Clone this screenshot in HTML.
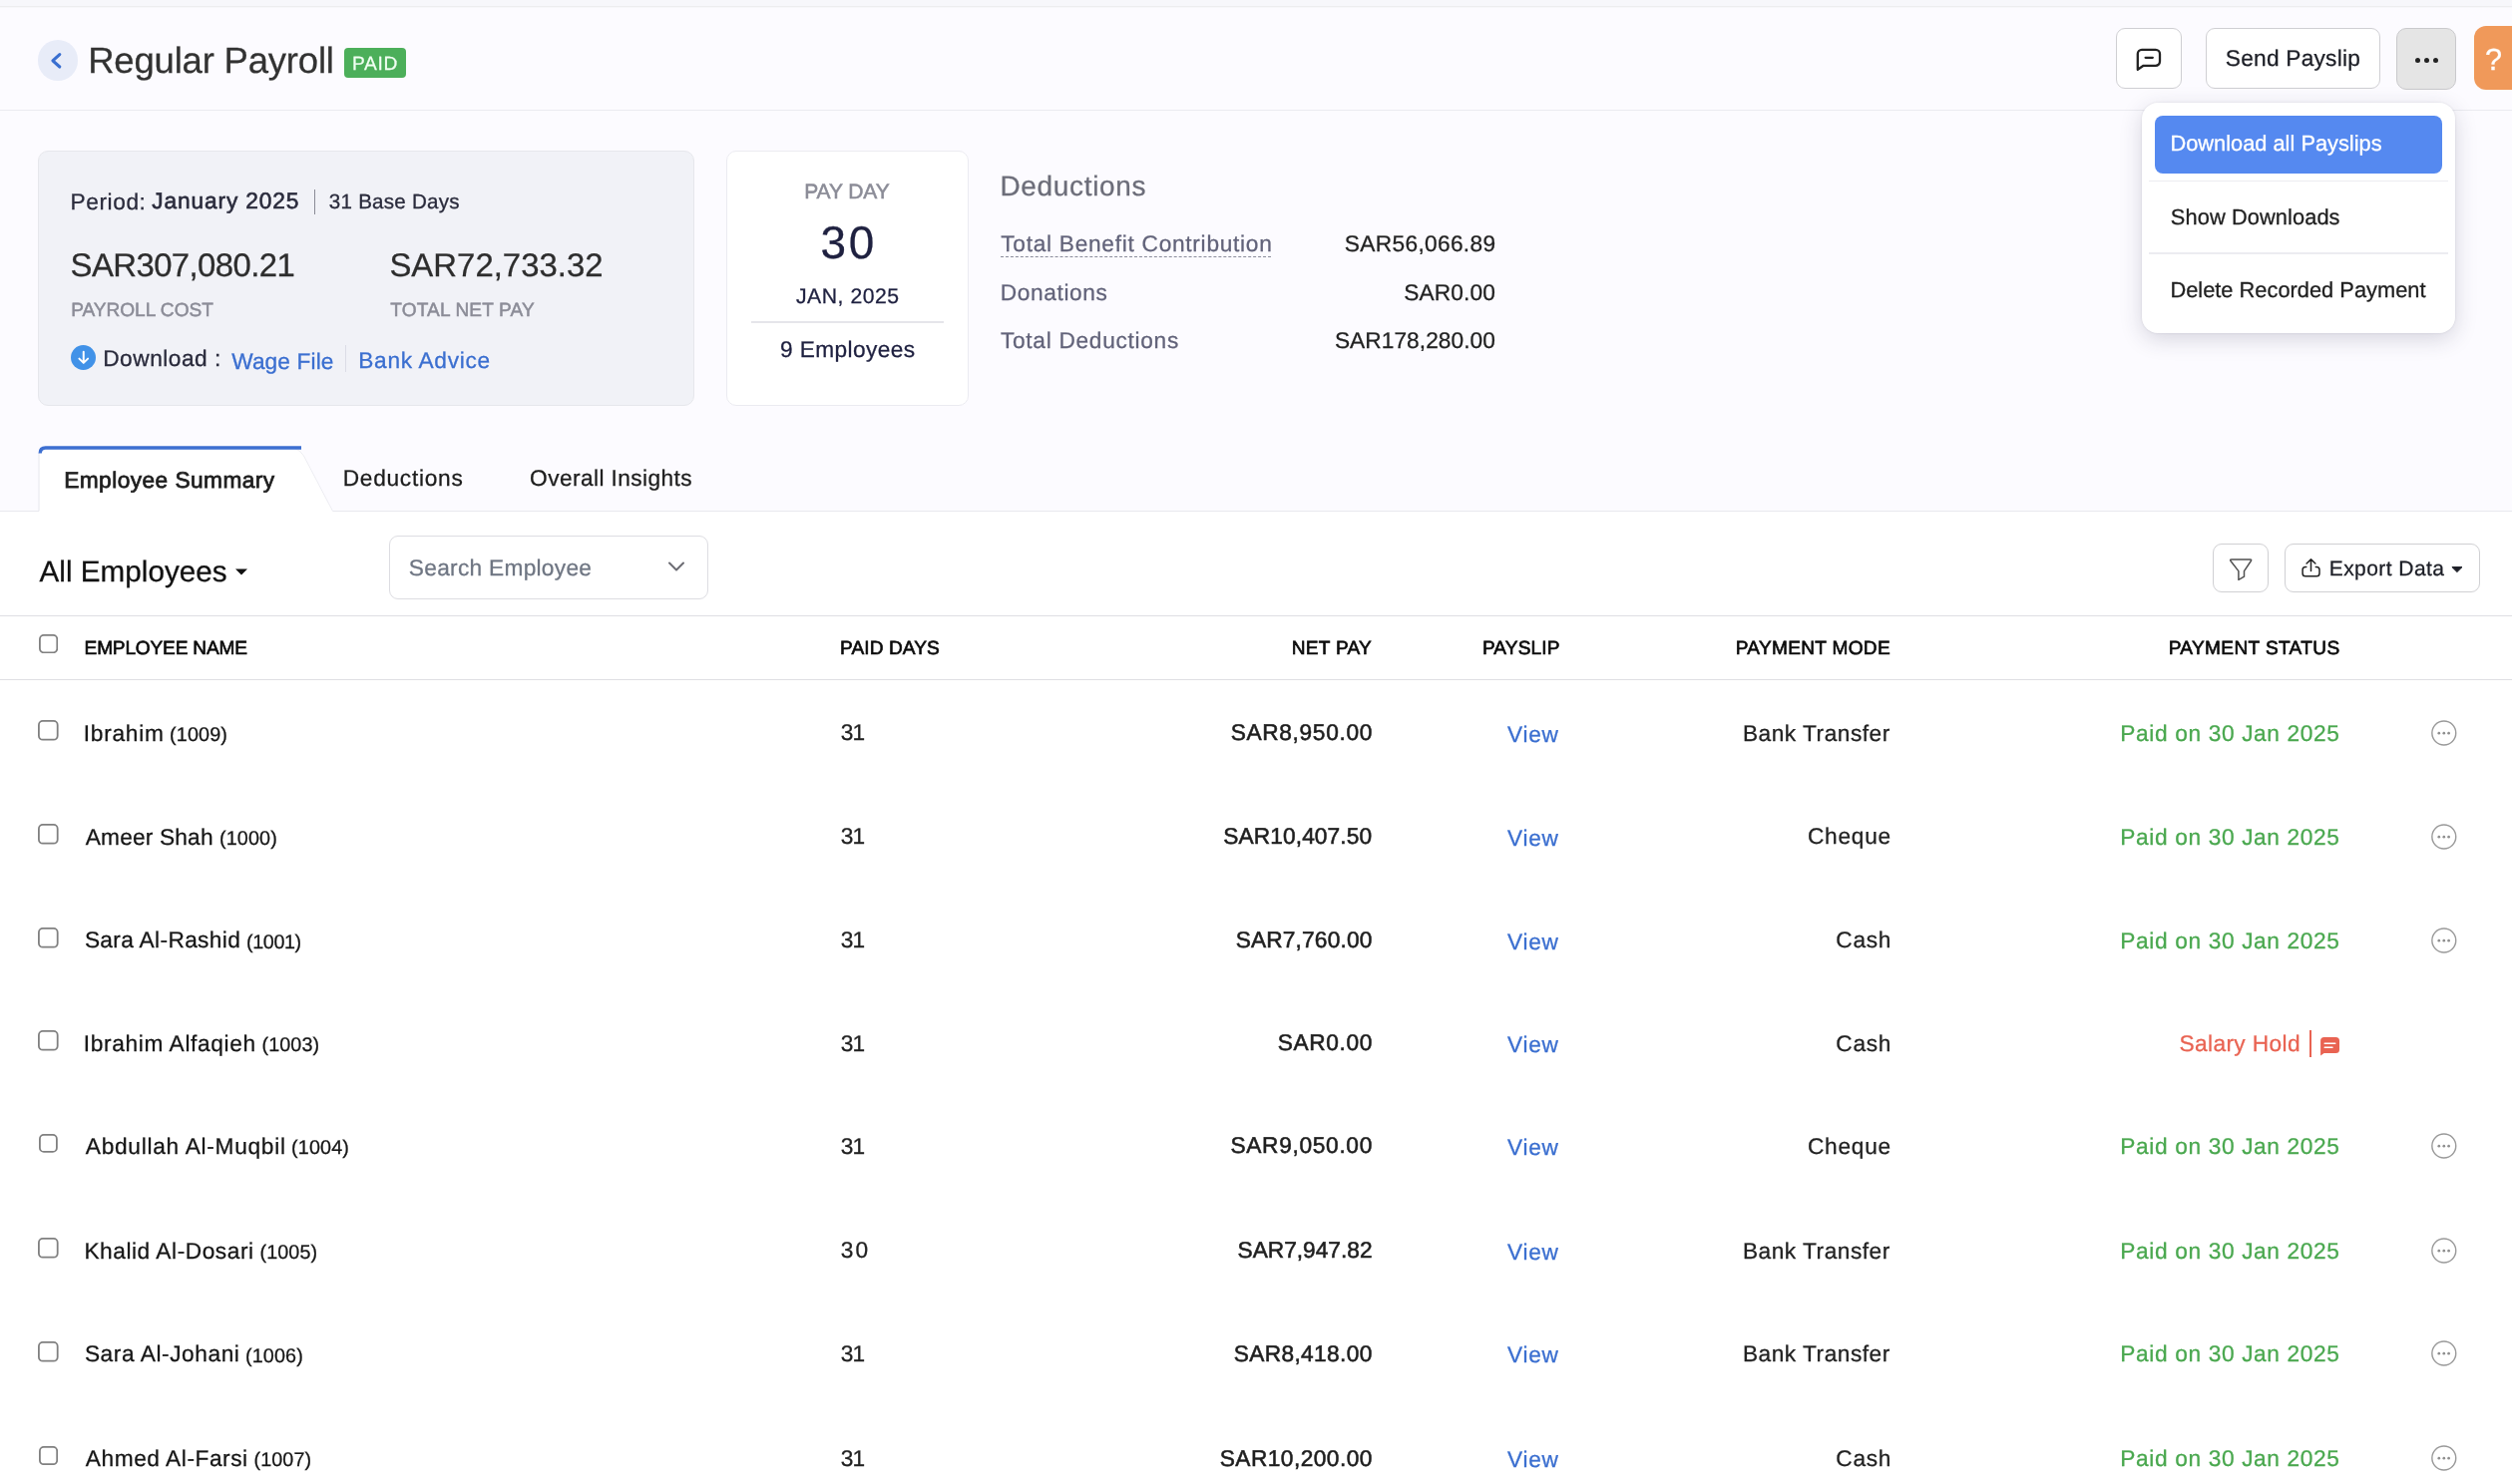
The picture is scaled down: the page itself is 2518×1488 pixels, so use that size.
<!DOCTYPE html>
<html lang="en"><head><meta charset="utf-8"><title>Regular Payroll</title>
<style>
html,body{margin:0;padding:0;}
body{width:2518px;height:1488px;overflow:hidden;position:relative;background:#fcfbff;font-family:"Liberation Sans",sans-serif;}
.b{position:absolute;display:block;}
.t{position:absolute;white-space:nowrap;line-height:1;text-rendering:geometricPrecision;}
#w{position:absolute;left:0;top:0;width:2518px;height:1488px;will-change:transform;}
</style></head><body><div id="w">
<div class="b" style="left:0px;top:0px;width:2518px;height:6px;background:#f7f7fb;"></div>
<div class="b" style="left:0px;top:6px;width:2518px;height:1px;background:#ededef;"></div>
<div class="b" style="left:0px;top:7px;width:2518px;height:1px;background:#f7f7fa;"></div>
<div class="b" style="left:0px;top:110px;width:2518px;height:1px;background:#ebebf0;"></div>
<div class="b" style="left:0px;top:512px;width:2518px;height:976px;background:#fff;"></div>
<div class="b" style="left:0px;top:512px;width:2518px;height:1px;background:#e9e9ee;"></div>
<div class="b" style="left:37.9px;top:40.4px;width:40.2px;height:40.2px;border-radius:50%;background:#e8ecf8;"></div>
<svg class="b" style="left:48px;top:49px" width="20" height="24" viewBox="0 0 20 24"><path d="M11.8 5.6 L4.9 11.8 L11.8 18" fill="none" stroke="#3a6fd0" stroke-width="3.1" stroke-linecap="round" stroke-linejoin="round"/></svg>
<div class="t" id="t0" style="top:43px;font-size:36.5px;color:#323232;letter-spacing:-0.20px;-webkit-text-stroke:0.25px #323232;left:88.2px;">Regular Payroll</div>
<div class="b" style="left:344.9px;top:47.9px;width:62.4px;height:30.1px;background:#4caf5a;border-radius:4px;"></div>
<div class="t" id="t1" style="top:55px;font-size:19.2px;color:#f1fff3;letter-spacing:0.65px;-webkit-text-stroke:0.25px #f1fff3;left:353.1px;">PAID</div>
<div class="b" style="left:2121px;top:28px;width:66px;height:61px;background:#fff;border:1px solid #cfcfd3;border-radius:9px;box-sizing:border-box;"></div>
<svg class="b" style="left:2139px;top:46px" width="30" height="28" viewBox="0 0 30 28"><path d="M3.8 23.8 V8 a4.2 4.2 0 0 1 4.2-4.2 h13.8 a4.2 4.2 0 0 1 4.2 4.2 v7.6 a4.2 4.2 0 0 1-4.2 4.2 H9.6 Z" fill="none" stroke="#222" stroke-width="2.3" stroke-linejoin="round"/><path d="M11.6 11.8 h7.2" stroke="#222" stroke-width="2.3" stroke-linecap="round"/></svg>
<div class="b" style="left:2211px;top:28px;width:175px;height:61px;background:#fff;border:1px solid #cfcfd3;border-radius:9px;box-sizing:border-box;"></div>
<div class="t" id="t2" style="top:47px;font-size:22.7px;color:#1c1e26;letter-spacing:0.24px;-webkit-text-stroke:0.28px #1c1e26;left:2230.8px;">Send Payslip</div>
<div class="b" style="left:2402px;top:28px;width:60px;height:62px;background:#e5e5e5;border:1px solid #c9c9cc;border-radius:10px;box-sizing:border-box;"></div>
<div class="b" style="left:2420.5px;top:57.5px;width:5px;height:5px;border-radius:50%;background:#222;"></div>
<div class="b" style="left:2429.7px;top:57.5px;width:5px;height:5px;border-radius:50%;background:#222;"></div>
<div class="b" style="left:2438.9px;top:57.5px;width:5px;height:5px;border-radius:50%;background:#222;"></div>
<div class="b" style="left:2480px;top:26px;width:60px;height:64px;background:#f0995a;border-radius:12px;"></div>
<div class="t" id="t3" style="top:45px;font-size:30.6px;color:#fff;-webkit-text-stroke:0.3px #fff;left:2491.0px;">?</div>
<div class="b" style="left:2147px;top:102.5px;width:314px;height:231px;background:#fff;border-radius:16px;box-shadow:0 6px 22px rgba(40,40,70,.18),0 0 3px rgba(40,40,70,.10);"></div>
<div class="b" style="left:2160px;top:115.5px;width:288px;height:58px;background:#5589f0;border-radius:8px;"></div>
<div class="t" id="t4" style="top:133px;font-size:21.8px;color:#fff;letter-spacing:0.01px;-webkit-text-stroke:0.3px #fff;left:2175.4px;">Download all Payslips</div>
<div class="b" style="left:2154px;top:180.5px;width:300px;height:1.5px;background:#ececf1;"></div>
<div class="t" id="t5" style="top:207px;font-size:21.8px;color:#1f1f1f;letter-spacing:0.10px;-webkit-text-stroke:0.3px #1f1f1f;left:2175.8px;">Show Downloads</div>
<div class="b" style="left:2154px;top:253px;width:300px;height:1.5px;background:#ececf1;"></div>
<div class="t" id="t6" style="top:280px;font-size:21.8px;color:#1f1f1f;letter-spacing:0.02px;-webkit-text-stroke:0.3px #1f1f1f;left:2175.4px;">Delete Recorded Payment</div>
<div class="b" style="left:38px;top:151px;width:658px;height:256px;background:#f1f2f7;border:1px solid #e6e7ec;border-radius:10px;box-sizing:border-box;"></div>
<div class="t" id="t7" style="top:191px;font-size:22.7px;color:#2a2b3c;letter-spacing:0.57px;-webkit-text-stroke:0.28px #2a2b3c;left:70.6px;">Period:</div>
<div class="t" id="t8" style="top:190px;font-size:22.7px;color:#2a2b3c;letter-spacing:0.89px;-webkit-text-stroke:0.6px #2a2b3c;left:152.2px;">January 2025</div>
<div class="b" style="left:315px;top:190px;width:1.2px;height:25px;background:#8a8b96;"></div>
<div class="t" id="t9" style="top:193px;font-size:20.6px;color:#2a2b3c;letter-spacing:0.24px;-webkit-text-stroke:0.28px #2a2b3c;left:329.8px;">31 Base Days</div>
<div class="t" id="t10" style="top:250px;font-size:32.9px;color:#2d2d2d;letter-spacing:-0.59px;-webkit-text-stroke:0.28px #2d2d2d;left:70.6px;">SAR307,080.21</div>
<div class="t" id="t11" style="top:250px;font-size:32.9px;color:#2d2d2d;letter-spacing:0.02px;-webkit-text-stroke:0.28px #2d2d2d;left:390.4px;">SAR72,733.32</div>
<div class="t" id="t12" style="top:302px;font-size:19.1px;color:#8b8c97;letter-spacing:-0.02px;-webkit-text-stroke:0.5px #8b8c97;left:71.2px;">PAYROLL COST</div>
<div class="t" id="t13" style="top:302px;font-size:19.1px;color:#8b8c97;letter-spacing:0.12px;-webkit-text-stroke:0.5px #8b8c97;left:391.3px;">TOTAL NET PAY</div>
<div class="b" style="left:71.1px;top:346.1px;width:25.2px;height:25.2px;border-radius:50%;background:#4192e8;"></div>
<svg class="b" style="left:71px;top:346px" width="26" height="26" viewBox="0 0 26 26"><path d="M12.75 6.8 V17.6 M8.4 13.6 L12.75 17.9 L17.1 13.6" fill="none" stroke="#fff" stroke-width="2" stroke-linecap="round" stroke-linejoin="round"/></svg>
<div class="t" id="t14" style="top:348px;font-size:22.7px;color:#2a2b3c;letter-spacing:0.52px;-webkit-text-stroke:0.3px #2a2b3c;left:103.2px;">Download :</div>
<div class="t" id="t15" style="top:351px;font-size:22.7px;color:#3b6fd0;letter-spacing:0.12px;-webkit-text-stroke:0.3px #3b6fd0;left:232.2px;">Wage File</div>
<div class="b" style="left:345.8px;top:346px;width:1.2px;height:27px;background:#dcdde6;"></div>
<div class="t" id="t16" style="top:350px;font-size:22.7px;color:#3b6fd0;letter-spacing:0.69px;-webkit-text-stroke:0.3px #3b6fd0;left:359.3px;">Bank Advice</div>
<div class="b" style="left:728.3px;top:151.2px;width:242.5px;height:255.6px;background:#fff;border:1px solid #ebebf1;border-radius:10px;box-sizing:border-box;"></div>
<div class="t" id="t17" style="top:182px;font-size:21px;color:#8b8c97;letter-spacing:-0.07px;-webkit-text-stroke:0.55px #8b8c97;left:648.9px;width:400px;text-align:center;">PAY DAY</div>
<div class="t" id="t18" style="top:221px;font-size:45.9px;color:#1f2140;letter-spacing:2.82px;-webkit-text-stroke:0.28px #1f2140;left:650.8px;width:400px;text-align:center;">30</div>
<div class="t" id="t19" style="top:287px;font-size:21.2px;color:#1f2140;letter-spacing:0.53px;-webkit-text-stroke:0.28px #1f2140;left:649.8px;width:400px;text-align:center;">JAN, 2025</div>
<div class="b" style="left:753px;top:322.3px;width:193px;height:1.5px;background:#e5e5ea;"></div>
<div class="t" id="t20" style="top:339px;font-size:22.7px;color:#1f2140;letter-spacing:0.39px;-webkit-text-stroke:0.28px #1f2140;left:649.7px;width:400px;text-align:center;">9 Employees</div>
<div class="t" id="t21" style="top:173px;font-size:28px;color:#6c6d79;letter-spacing:0.68px;-webkit-text-stroke:0.28px #6c6d79;left:1002.4px;">Deductions</div>
<div class="t" id="t22" style="top:233px;font-size:22.7px;color:#62637a;letter-spacing:0.72px;-webkit-text-stroke:0.28px #62637a;left:1003.3px;">Total Benefit Contribution</div>
<div class="b" style="left:1003.3px;top:257.2px;width:270.5px;height:0px;border-top:1.3px dashed #8b8c9c;"></div>
<div class="t" id="t23" style="top:282px;font-size:22.7px;color:#62637a;letter-spacing:0.61px;-webkit-text-stroke:0.28px #62637a;left:1002.8px;">Donations</div>
<div class="t" id="t24" style="top:330px;font-size:22.7px;color:#62637a;letter-spacing:0.70px;-webkit-text-stroke:0.28px #62637a;left:1003.0px;">Total Deductions</div>
<div class="t" id="t25" style="top:233px;font-size:22.7px;color:#222;letter-spacing:0.33px;-webkit-text-stroke:0.28px #222;right:1018.6px;">SAR56,066.89</div>
<div class="t" id="t26" style="top:282px;font-size:22.7px;color:#222;letter-spacing:0.11px;-webkit-text-stroke:0.28px #222;right:1019.1px;">SAR0.00</div>
<div class="t" id="t27" style="top:330px;font-size:22.7px;color:#222;letter-spacing:0.06px;-webkit-text-stroke:0.28px #222;right:1019.1px;">SAR178,280.00</div>
<svg class="b" style="left:30px;top:440px" width="320" height="80" viewBox="0 0 320 80"><path d="M9 73.5 V14 Q9 8.5 14.5 8.5 H264 Q271 8.5 274.5 15.5 L304 73.5 Z" fill="#fff"/><path d="M9 72.5 V14" fill="none" stroke="#e6e6ec" stroke-width="1"/><path d="M266 10 Q271 11 274.5 17 L303.5 72.5" fill="none" stroke="#ececf2" stroke-width="1"/><path d="M10.2 14.5 Q10.2 9 15.7 9 H272" fill="none" stroke="#3d6fd1" stroke-width="3.4"/></svg>
<div class="t" id="t28" style="top:470px;font-size:22.7px;color:#1d1d1d;letter-spacing:0.45px;-webkit-text-stroke:0.75px #1d1d1d;left:64.2px;">Employee Summary</div>
<div class="t" id="t29" style="top:468px;font-size:22.7px;color:#1d1d1d;letter-spacing:0.73px;-webkit-text-stroke:0.28px #1d1d1d;left:343.7px;">Deductions</div>
<div class="t" id="t30" style="top:468px;font-size:22.7px;color:#1d1d1d;letter-spacing:0.41px;-webkit-text-stroke:0.28px #1d1d1d;left:531.1px;">Overall Insights</div>
<div class="t" id="t31" style="top:559px;font-size:29.6px;color:#111;letter-spacing:0.05px;-webkit-text-stroke:0.28px #111;left:39.5px;">All Employees</div>
<svg class="b" style="left:234px;top:568px" width="16" height="10" viewBox="0 0 16 10"><path d="M2 2.5 H14 L8 8.5 Z" fill="#111"/></svg>
<div class="b" style="left:390px;top:537px;width:320px;height:64px;background:#fff;border:1px solid #dddde2;border-radius:9px;box-sizing:border-box;"></div>
<div class="t" id="t32" style="top:558px;font-size:22.7px;color:#6f7683;letter-spacing:0.29px;-webkit-text-stroke:0.28px #6f7683;left:409.8px;">Search Employee</div>
<svg class="b" style="left:666px;top:558px" width="24" height="20" viewBox="0 0 24 20"><path d="M5 6.5 L12 13.5 L19 6.5" fill="none" stroke="#6b6b72" stroke-width="2" stroke-linecap="round" stroke-linejoin="round"/></svg>
<div class="b" style="left:2218px;top:545px;width:56px;height:49px;background:#fff;border:1px solid #d0d0d3;border-radius:9px;box-sizing:border-box;"></div>
<svg class="b" style="left:2232px;top:556px" width="28" height="28" viewBox="0 0 28 28"><path d="M4.7 4.9 H23.6 Q25.3 4.9 24.3 6.5 L17.5 16.6 V22.2 L11.9 25.3 V16.6 L4 6.5 Q3 4.9 4.7 4.9 Z" fill="none" stroke="#505050" stroke-width="1.5" stroke-linejoin="round"/></svg>
<div class="b" style="left:2290px;top:545px;width:196px;height:49px;background:#fff;border:1px solid #d0d0d3;border-radius:9px;box-sizing:border-box;"></div>
<svg class="b" style="left:2304px;top:556px" width="24" height="26" viewBox="0 0 24 26"><path d="M7.8 12.6 H6.9 a2.8 2.8 0 0 0 -2.8 2.8 V19 a2.8 2.8 0 0 0 2.8 2.8 H18.2 a2.8 2.8 0 0 0 2.8 -2.8 V15.4 a2.8 2.8 0 0 0 -2.8 -2.8 H17.3 M12.5 16.6 V5.2 M8.1 9 L12.5 4.9 L16.9 9" fill="none" stroke="#222" stroke-width="1.5" stroke-linecap="round" stroke-linejoin="round"/></svg>
<div class="t" id="t33" style="top:560px;font-size:21px;color:#1c1e26;letter-spacing:0.44px;-webkit-text-stroke:0.28px #1c1e26;left:2334.7px;">Export Data</div>
<svg class="b" style="left:2456px;top:566px" width="16" height="10" viewBox="0 0 16 10"><path d="M1.9 2.6 H12 L6.95 7.6 Z" fill="#1c1e26" stroke="#1c1e26" stroke-width="1" stroke-linejoin="round"/></svg>
<div class="b" style="left:0px;top:617px;width:2518px;height:1.3px;background:#dfdfe3;"></div>
<div class="b" style="left:0px;top:680.5px;width:2518px;height:1.3px;background:#dfdfe3;"></div>
<svg class="b" style="left:38.8px;top:636px" width="19.2" height="19.2"><rect x="0.9" y="0.9" width="17.4" height="17.4" rx="4" fill="#fff" stroke="#808080" stroke-width="1.8"/></svg>
<div class="t" id="t34" style="top:641px;font-size:19.1px;color:#0b0b0b;letter-spacing:-0.18px;-webkit-text-stroke:0.65px #0b0b0b;left:84.6px;">EMPLOYEE NAME</div>
<div class="t" id="t35" style="top:641px;font-size:19.1px;color:#0b0b0b;letter-spacing:0.07px;-webkit-text-stroke:0.65px #0b0b0b;left:842.1px;">PAID DAYS</div>
<div class="t" id="t36" style="top:641px;font-size:19.1px;color:#0b0b0b;letter-spacing:0.24px;-webkit-text-stroke:0.65px #0b0b0b;right:1143.0px;">NET PAY</div>
<div class="t" id="t37" style="top:641px;font-size:19.1px;color:#0b0b0b;letter-spacing:0.13px;-webkit-text-stroke:0.65px #0b0b0b;right:954.4px;">PAYSLIP</div>
<div class="t" id="t38" style="top:641px;font-size:19.1px;color:#0b0b0b;letter-spacing:0.30px;-webkit-text-stroke:0.65px #0b0b0b;right:623.0px;">PAYMENT MODE</div>
<div class="t" id="t39" style="top:641px;font-size:19.1px;color:#0b0b0b;letter-spacing:0.35px;-webkit-text-stroke:0.65px #0b0b0b;right:172.5px;">PAYMENT STATUS</div>
<svg class="b" style="left:38.1px;top:722.3px" width="20.6" height="20.6"><rect x="0.9" y="0.9" width="18.8" height="18.8" rx="4" fill="#fff" stroke="#808080" stroke-width="1.8"/></svg>
<div class="t" id="t40" style="top:724px;font-size:22.7px;color:#161616;letter-spacing:0.73px;-webkit-text-stroke:0.28px #161616;left:83.8px;">Ibrahim</div>
<div class="t" id="t41" style="top:728px;font-size:19.8px;color:#161616;letter-spacing:0.11px;-webkit-text-stroke:0.28px #161616;left:170.1px;">(1009)</div>
<div class="t" id="t42" style="top:723px;font-size:22.7px;color:#222;letter-spacing:-0.71px;-webkit-text-stroke:0.28px #222;left:842.7px;">31</div>
<div class="t" id="t43" style="top:723px;font-size:22.7px;color:#1e1e1e;letter-spacing:0.67px;-webkit-text-stroke:0.55px #1e1e1e;right:1142.0px;">SAR8,950.00</div>
<div class="t" id="t44" style="top:725px;font-size:22.7px;color:#3b6fd0;letter-spacing:0.68px;-webkit-text-stroke:0.28px #3b6fd0;right:955.4px;">View</div>
<div class="t" id="t45" style="top:724px;font-size:22.7px;color:#222;letter-spacing:0.51px;-webkit-text-stroke:0.28px #222;right:623.2px;">Bank Transfer</div>
<div class="t" id="t46" style="top:724px;font-size:22.7px;color:#4aa84f;letter-spacing:0.64px;-webkit-text-stroke:0.28px #4aa84f;right:172.4px;">Paid on 30 Jan 2025</div>
<svg class="b" style="left:2436px;top:720.60px" width="28" height="28"><circle cx="13.8" cy="14" r="11.95" fill="none" stroke="#9a9a9a" stroke-width="1.4"/><circle cx="8.8" cy="14.2" r="1.35" fill="#8e8e8e"/><circle cx="13.8" cy="14.2" r="1.35" fill="#8e8e8e"/><circle cx="18.6" cy="14.2" r="1.35" fill="#8e8e8e"/></svg>
<svg class="b" style="left:38.1px;top:826.3px" width="20.6" height="20.6"><rect x="0.9" y="0.9" width="18.8" height="18.8" rx="4" fill="#fff" stroke="#808080" stroke-width="1.8"/></svg>
<div class="t" id="t47" style="top:828px;font-size:22.7px;color:#161616;letter-spacing:0.18px;-webkit-text-stroke:0.28px #161616;left:85.8px;">Ameer Shah</div>
<div class="t" id="t48" style="top:832px;font-size:19.8px;color:#161616;letter-spacing:0.11px;-webkit-text-stroke:0.28px #161616;left:220.0px;">(1000)</div>
<div class="t" id="t49" style="top:827px;font-size:22.7px;color:#222;letter-spacing:-0.71px;-webkit-text-stroke:0.28px #222;left:842.7px;">31</div>
<div class="t" id="t50" style="top:827px;font-size:22.7px;color:#1e1e1e;letter-spacing:0.11px;-webkit-text-stroke:0.55px #1e1e1e;right:1142.8px;">SAR10,407.50</div>
<div class="t" id="t51" style="top:829px;font-size:22.7px;color:#3b6fd0;letter-spacing:0.68px;-webkit-text-stroke:0.28px #3b6fd0;right:955.4px;">View</div>
<div class="t" id="t52" style="top:827px;font-size:22.7px;color:#222;letter-spacing:0.74px;-webkit-text-stroke:0.28px #222;right:622.1px;">Cheque</div>
<div class="t" id="t53" style="top:828px;font-size:22.7px;color:#4aa84f;letter-spacing:0.64px;-webkit-text-stroke:0.28px #4aa84f;right:172.4px;">Paid on 30 Jan 2025</div>
<svg class="b" style="left:2436px;top:824.60px" width="28" height="28"><circle cx="13.8" cy="14" r="11.95" fill="none" stroke="#9a9a9a" stroke-width="1.4"/><circle cx="8.8" cy="14.2" r="1.35" fill="#8e8e8e"/><circle cx="13.8" cy="14.2" r="1.35" fill="#8e8e8e"/><circle cx="18.6" cy="14.2" r="1.35" fill="#8e8e8e"/></svg>
<svg class="b" style="left:38.1px;top:930.2px" width="20.6" height="20.6"><rect x="0.9" y="0.9" width="18.8" height="18.8" rx="4" fill="#fff" stroke="#808080" stroke-width="1.8"/></svg>
<div class="t" id="t54" style="top:931px;font-size:22.7px;color:#161616;letter-spacing:0.35px;-webkit-text-stroke:0.28px #161616;left:84.9px;">Sara Al-Rashid</div>
<div class="t" id="t55" style="top:936px;font-size:19.8px;color:#161616;letter-spacing:-0.42px;-webkit-text-stroke:0.28px #161616;left:247.1px;">(1001)</div>
<div class="t" id="t56" style="top:931px;font-size:22.7px;color:#222;letter-spacing:-0.71px;-webkit-text-stroke:0.28px #222;left:842.7px;">31</div>
<div class="t" id="t57" style="top:931px;font-size:22.7px;color:#1e1e1e;letter-spacing:0.17px;-webkit-text-stroke:0.55px #1e1e1e;right:1142.5px;">SAR7,760.00</div>
<div class="t" id="t58" style="top:933px;font-size:22.7px;color:#3b6fd0;letter-spacing:0.68px;-webkit-text-stroke:0.28px #3b6fd0;right:955.4px;">View</div>
<div class="t" id="t59" style="top:931px;font-size:22.7px;color:#222;letter-spacing:0.68px;-webkit-text-stroke:0.28px #222;right:622.0px;">Cash</div>
<div class="t" id="t60" style="top:932px;font-size:22.7px;color:#4aa84f;letter-spacing:0.64px;-webkit-text-stroke:0.28px #4aa84f;right:172.4px;">Paid on 30 Jan 2025</div>
<svg class="b" style="left:2436px;top:928.50px" width="28" height="28"><circle cx="13.8" cy="14" r="11.95" fill="none" stroke="#9a9a9a" stroke-width="1.4"/><circle cx="8.8" cy="14.2" r="1.35" fill="#8e8e8e"/><circle cx="13.8" cy="14.2" r="1.35" fill="#8e8e8e"/><circle cx="18.6" cy="14.2" r="1.35" fill="#8e8e8e"/></svg>
<svg class="b" style="left:38.1px;top:1033.4px" width="20.6" height="20.6"><rect x="0.9" y="0.9" width="18.8" height="18.8" rx="4" fill="#fff" stroke="#808080" stroke-width="1.8"/></svg>
<div class="t" id="t61" style="top:1035px;font-size:22.7px;color:#161616;letter-spacing:0.64px;-webkit-text-stroke:0.28px #161616;left:83.8px;">Ibrahim Alfaqieh</div>
<div class="t" id="t62" style="top:1039px;font-size:19.8px;color:#161616;letter-spacing:0.05px;-webkit-text-stroke:0.28px #161616;left:262.6px;">(1003)</div>
<div class="t" id="t63" style="top:1035px;font-size:22.7px;color:#222;letter-spacing:-0.71px;-webkit-text-stroke:0.28px #222;left:842.7px;">31</div>
<div class="t" id="t64" style="top:1034px;font-size:22.7px;color:#1e1e1e;letter-spacing:0.61px;-webkit-text-stroke:0.55px #1e1e1e;right:1142.1px;">SAR0.00</div>
<div class="t" id="t65" style="top:1036px;font-size:22.7px;color:#3b6fd0;letter-spacing:0.68px;-webkit-text-stroke:0.28px #3b6fd0;right:955.4px;">View</div>
<div class="t" id="t66" style="top:1035px;font-size:22.7px;color:#222;letter-spacing:0.68px;-webkit-text-stroke:0.28px #222;right:622.0px;">Cash</div>
<div class="t" id="t67" style="top:1035px;font-size:22.7px;color:#e96352;letter-spacing:0.40px;-webkit-text-stroke:0.28px #e96352;left:2184.4px;">Salary Hold</div>
<div class="b" style="left:2315.1px;top:1032.7px;width:2px;height:27.1px;background:#e96352;"></div>
<svg class="b" style="left:2325px;top:1038.7px" width="22" height="22" viewBox="0 0 22 22"><path d="M1.1 19.6 V4.6 a3.6 3.6 0 0 1 3.6-3.6 h11.7 a3.6 3.6 0 0 1 3.6 3.6 v8.9 a3.6 3.6 0 0 1-3.6 3.6 H4.6 Z" fill="#e96352"/><path d="M5.2 7.2 h10.6 M5.2 11.3 h7.8" stroke="#fff" stroke-width="1.5" stroke-linecap="round"/></svg>
<svg class="b" style="left:39px;top:1137.4px" width="18.8" height="18.8"><rect x="0.9" y="0.9" width="17" height="17" rx="4" fill="#fff" stroke="#808080" stroke-width="1.8"/></svg>
<div class="t" id="t68" style="top:1138px;font-size:22.7px;color:#161616;letter-spacing:0.72px;-webkit-text-stroke:0.28px #161616;left:85.8px;">Abdullah Al-Muqbil</div>
<div class="t" id="t69" style="top:1142px;font-size:19.8px;color:#161616;letter-spacing:0.11px;-webkit-text-stroke:0.28px #161616;left:292.1px;">(1004)</div>
<div class="t" id="t70" style="top:1138px;font-size:22.7px;color:#222;letter-spacing:-0.71px;-webkit-text-stroke:0.28px #222;left:842.7px;">31</div>
<div class="t" id="t71" style="top:1137px;font-size:22.7px;color:#1e1e1e;letter-spacing:0.69px;-webkit-text-stroke:0.55px #1e1e1e;right:1142.0px;">SAR9,050.00</div>
<div class="t" id="t72" style="top:1139px;font-size:22.7px;color:#3b6fd0;letter-spacing:0.68px;-webkit-text-stroke:0.28px #3b6fd0;right:955.4px;">View</div>
<div class="t" id="t73" style="top:1138px;font-size:22.7px;color:#222;letter-spacing:0.74px;-webkit-text-stroke:0.28px #222;right:622.1px;">Cheque</div>
<div class="t" id="t74" style="top:1138px;font-size:22.7px;color:#4aa84f;letter-spacing:0.64px;-webkit-text-stroke:0.28px #4aa84f;right:172.4px;">Paid on 30 Jan 2025</div>
<svg class="b" style="left:2436px;top:1134.70px" width="28" height="28"><circle cx="13.8" cy="14" r="11.95" fill="none" stroke="#9a9a9a" stroke-width="1.4"/><circle cx="8.8" cy="14.2" r="1.35" fill="#8e8e8e"/><circle cx="13.8" cy="14.2" r="1.35" fill="#8e8e8e"/><circle cx="18.6" cy="14.2" r="1.35" fill="#8e8e8e"/></svg>
<svg class="b" style="left:38.1px;top:1241.3px" width="20.6" height="20.6"><rect x="0.9" y="0.9" width="18.8" height="18.8" rx="4" fill="#fff" stroke="#808080" stroke-width="1.8"/></svg>
<div class="t" id="t75" style="top:1243px;font-size:22.7px;color:#161616;letter-spacing:0.55px;-webkit-text-stroke:0.28px #161616;left:84.4px;">Khalid Al-Dosari</div>
<div class="t" id="t76" style="top:1247px;font-size:19.8px;color:#161616;letter-spacing:0.09px;-webkit-text-stroke:0.28px #161616;left:260.5px;">(1005)</div>
<div class="t" id="t77" style="top:1242px;font-size:22.7px;color:#222;letter-spacing:2.07px;-webkit-text-stroke:0.28px #222;left:842.7px;">30</div>
<div class="t" id="t78" style="top:1242px;font-size:22.7px;color:#1e1e1e;-webkit-text-stroke:0.55px #1e1e1e;right:1142.5px;">SAR7,947.82</div>
<div class="t" id="t79" style="top:1244px;font-size:22.7px;color:#3b6fd0;letter-spacing:0.68px;-webkit-text-stroke:0.28px #3b6fd0;right:955.4px;">View</div>
<div class="t" id="t80" style="top:1243px;font-size:22.7px;color:#222;letter-spacing:0.51px;-webkit-text-stroke:0.28px #222;right:623.2px;">Bank Transfer</div>
<div class="t" id="t81" style="top:1243px;font-size:22.7px;color:#4aa84f;letter-spacing:0.64px;-webkit-text-stroke:0.28px #4aa84f;right:172.4px;">Paid on 30 Jan 2025</div>
<svg class="b" style="left:2436px;top:1239.60px" width="28" height="28"><circle cx="13.8" cy="14" r="11.95" fill="none" stroke="#9a9a9a" stroke-width="1.4"/><circle cx="8.8" cy="14.2" r="1.35" fill="#8e8e8e"/><circle cx="13.8" cy="14.2" r="1.35" fill="#8e8e8e"/><circle cx="18.6" cy="14.2" r="1.35" fill="#8e8e8e"/></svg>
<svg class="b" style="left:38.1px;top:1345.1px" width="20.6" height="20.6"><rect x="0.9" y="0.9" width="18.8" height="18.8" rx="4" fill="#fff" stroke="#808080" stroke-width="1.8"/></svg>
<div class="t" id="t82" style="top:1346px;font-size:22.7px;color:#161616;letter-spacing:0.57px;-webkit-text-stroke:0.28px #161616;left:84.9px;">Sara Al-Johani</div>
<div class="t" id="t83" style="top:1351px;font-size:19.8px;color:#161616;letter-spacing:0.11px;-webkit-text-stroke:0.28px #161616;left:246.0px;">(1006)</div>
<div class="t" id="t84" style="top:1346px;font-size:22.7px;color:#222;letter-spacing:-0.71px;-webkit-text-stroke:0.28px #222;left:842.7px;">31</div>
<div class="t" id="t85" style="top:1346px;font-size:22.7px;color:#1e1e1e;letter-spacing:0.37px;-webkit-text-stroke:0.55px #1e1e1e;right:1142.3px;">SAR8,418.00</div>
<div class="t" id="t86" style="top:1347px;font-size:22.7px;color:#3b6fd0;letter-spacing:0.68px;-webkit-text-stroke:0.28px #3b6fd0;right:955.4px;">View</div>
<div class="t" id="t87" style="top:1346px;font-size:22.7px;color:#222;letter-spacing:0.51px;-webkit-text-stroke:0.28px #222;right:623.2px;">Bank Transfer</div>
<div class="t" id="t88" style="top:1346px;font-size:22.7px;color:#4aa84f;letter-spacing:0.64px;-webkit-text-stroke:0.28px #4aa84f;right:172.4px;">Paid on 30 Jan 2025</div>
<svg class="b" style="left:2436px;top:1343.40px" width="28" height="28"><circle cx="13.8" cy="14" r="11.95" fill="none" stroke="#9a9a9a" stroke-width="1.4"/><circle cx="8.8" cy="14.2" r="1.35" fill="#8e8e8e"/><circle cx="13.8" cy="14.2" r="1.35" fill="#8e8e8e"/><circle cx="18.6" cy="14.2" r="1.35" fill="#8e8e8e"/></svg>
<svg class="b" style="left:38.9px;top:1450px" width="19.1" height="19.1"><rect x="0.9" y="0.9" width="17.3" height="17.3" rx="4" fill="#fff" stroke="#808080" stroke-width="1.8"/></svg>
<div class="t" id="t89" style="top:1451px;font-size:22.7px;color:#161616;letter-spacing:0.56px;-webkit-text-stroke:0.28px #161616;left:85.8px;">Ahmed Al-Farsi</div>
<div class="t" id="t90" style="top:1455px;font-size:19.8px;color:#161616;letter-spacing:0.09px;-webkit-text-stroke:0.28px #161616;left:254.5px;">(1007)</div>
<div class="t" id="t91" style="top:1451px;font-size:22.7px;color:#222;letter-spacing:-0.71px;-webkit-text-stroke:0.28px #222;left:842.7px;">31</div>
<div class="t" id="t92" style="top:1451px;font-size:22.7px;color:#1e1e1e;letter-spacing:0.46px;-webkit-text-stroke:0.55px #1e1e1e;right:1142.2px;">SAR10,200.00</div>
<div class="t" id="t93" style="top:1452px;font-size:22.7px;color:#3b6fd0;letter-spacing:0.68px;-webkit-text-stroke:0.28px #3b6fd0;right:955.4px;">View</div>
<div class="t" id="t94" style="top:1451px;font-size:22.7px;color:#222;letter-spacing:0.68px;-webkit-text-stroke:0.28px #222;right:622.0px;">Cash</div>
<div class="t" id="t95" style="top:1451px;font-size:22.7px;color:#4aa84f;letter-spacing:0.64px;-webkit-text-stroke:0.28px #4aa84f;right:172.4px;">Paid on 30 Jan 2025</div>
<svg class="b" style="left:2436px;top:1447.90px" width="28" height="28"><circle cx="13.8" cy="14" r="11.95" fill="none" stroke="#9a9a9a" stroke-width="1.4"/><circle cx="8.8" cy="14.2" r="1.35" fill="#8e8e8e"/><circle cx="13.8" cy="14.2" r="1.35" fill="#8e8e8e"/><circle cx="18.6" cy="14.2" r="1.35" fill="#8e8e8e"/></svg>
</div></body></html>
